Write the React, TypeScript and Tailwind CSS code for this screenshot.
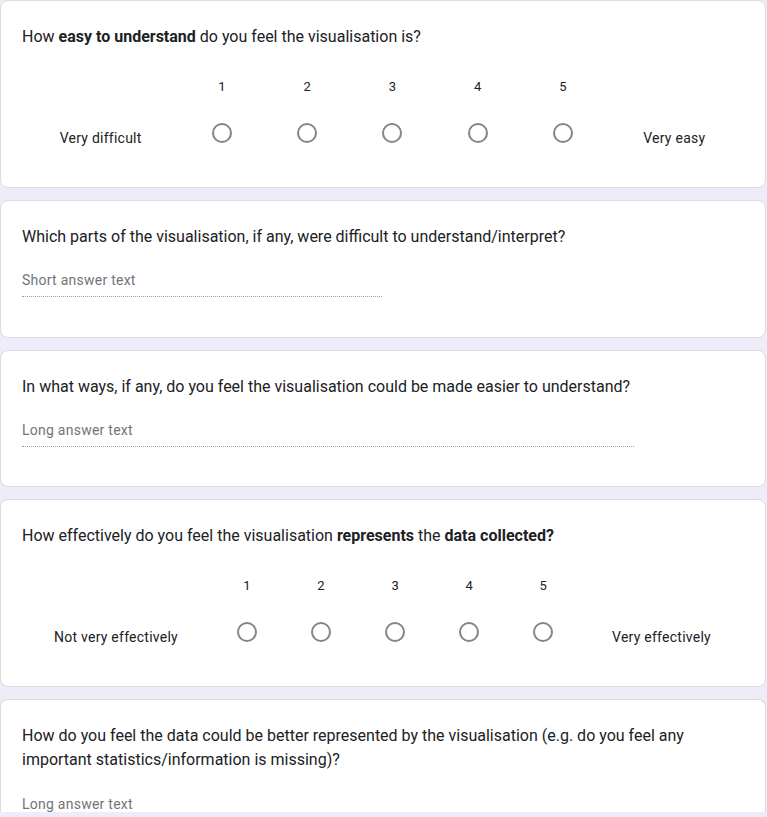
import React from "react"

function Radio() {
    return <span className="mt-[26px] block w-5 h-5 rounded-full border-2 border-[#80868b]" />
}

function Scale({ low, high }: { low: string; high: string }) {
    return (
        <div className="flex items-start mt-[28px]">
            <div className="grow pt-[51px] text-center text-sm leading-5 tracking-[0.25px] whitespace-nowrap">{low}</div>
            {[1, 2, 3, 4, 5].map((n) => (
                <div key={n} className="grow basis-[10px] flex flex-col items-center">
                    <span className="text-[13px] leading-5">{n}</span>
                    <Radio />
                </div>
            ))}
            <div className="grow pt-[51px] text-center text-sm leading-5 tracking-[0.25px] whitespace-nowrap">{high}</div>
        </div>
    )
}

function TextAnswer({ label, width }: { label: string; width: string }) {
    return (
        <div className={`mt-[21px] pb-[6px] border-b border-dotted border-[#9aa0a6] text-sm leading-5 tracking-[0.25px] text-[#70757a] ${width}`}>
            {label}
        </div>
    )
}

export default function App() {
    return (
        <div className="h-[817px] overflow-hidden bg-[#f0ebf8] font-['Roboto',sans-serif] text-[#202124]">
            <div className="w-[766px] flex flex-col gap-3">
                <section className="bg-white border border-[#dadce0] rounded-lg pl-[21px] pr-[22px] pt-6 pb-[39px]">
                    <h2 className="text-base leading-6">
                        How <b className="font-bold">easy to understand</b> do you feel the visualisation is?
                    </h2>
                    <Scale low="Very difficult" high="Very easy" />
                </section>

                <section className="bg-white border border-[#dadce0] rounded-lg pl-[21px] pr-[22px] pt-6 pb-10">
                    <h2 className="text-base leading-6">
                        Which parts of the visualisation, if any, were difficult to understand/interpret?
                    </h2>
                    <TextAnswer label="Short answer text" width="w-[360px]" />
                </section>

                <section className="bg-white border border-[#dadce0] rounded-lg pl-[21px] pr-[22px] pt-6 pb-[39px]">
                    <h2 className="text-base leading-6">
                        In what ways, if any, do you feel the visualisation could be made easier to understand?
                    </h2>
                    <TextAnswer label="Long answer text" width="w-[612px]" />
                </section>

                <section className="bg-white border border-[#dadce0] rounded-lg pl-[21px] pr-[22px] pt-6 pb-[39px]">
                    <h2 className="text-base leading-6">
                        How effectively do you feel the visualisation <b className="font-bold">represents</b> the{" "}
                        <b className="font-bold">data collected?</b>
                    </h2>
                    <Scale low="Not very effectively" high="Very effectively" />
                </section>

                <section className="h-[113px] overflow-hidden bg-white border border-b-0 border-[#dadce0] rounded-t-lg pl-[21px] pr-[22px] pt-6">
                    <h2 className="text-base leading-6">
                        How do you feel the data could be better represented by the visualisation (e.g. do you feel any
                        important statistics/information is missing)?
                    </h2>
                    <div className="mt-[22px] text-sm leading-5 tracking-[0.25px] text-[#70757a]">Long answer text</div>
                </section>
            </div>
        </div>
    )
}
